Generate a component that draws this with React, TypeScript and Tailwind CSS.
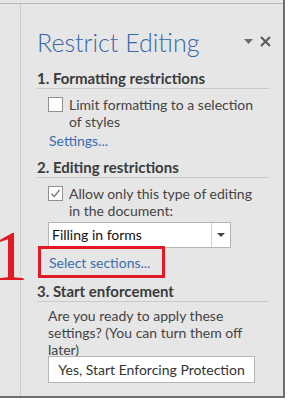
import React from "react";

const font = { fontFamily: 'Lato, "Noto Sans", sans-serif' };

function Check({ checked }: { checked?: boolean }) {
  return (
    <div className="w-[15px] h-[15px] shrink-0 border border-[#8f8f8f] bg-white flex items-center justify-center mt-[1px]">
      {checked && (
        <svg width="11" height="11" viewBox="0 0 11 11">
          <path d="M1.5 5.8 L4.2 8.6 L9.6 1.8" fill="none" stroke="#6a6a6a" strokeWidth="1.3" />
        </svg>
      )}
    </div>
  );
}

function Heading({ children, className = "" }: { children: React.ReactNode; className?: string }) {
  return (
    <div className={"border-b border-[#c9c9c9] text-[15px] font-bold text-[#3b3b3b] leading-[18px] pb-[1px] " + className}>
      {children}
    </div>
  );
}

export default function App() {
  return (
    <div className="w-[300px] h-[400px] bg-white relative overflow-hidden" style={font}>
      <div className="w-[285px] h-[398px] bg-[#e6e6e6] border-r-2 border-b-2 border-[#6e6e6e] flex flex-col">
        <div className="h-[4px] border-b border-[#b8b8b8] shrink-0" />
        <div className="flex flex-1">
          <div className="w-[21px] border-r border-[#cdcdcd] shrink-0" />
          <div className="flex-1 pl-[16px] pr-[14px] flex flex-col text-[14px] text-[#444]">
            <div className="flex items-center justify-between mt-[21px] h-[34px]">
              <div className="text-[25px] font-light text-[#3768ac] leading-[30px]">
                Restrict Editing
              </div>
              <div className="flex items-center gap-[7px] mr-[-2px] mt-[-2px]">
                <svg width="9" height="5" viewBox="0 0 9 5">
                  <path d="M0 0 H9 L4.5 5 Z" fill="#6b6b6b" />
                </svg>
                <svg width="11" height="11" viewBox="0 0 11 11">
                  <path d="M1 1 L10 10 M10 1 L1 10" stroke="#5c5c5c" strokeWidth="2.2" />
                </svg>
              </div>
            </div>
            <Heading className="mt-[10px]">1. Formatting restrictions</Heading>
            <div className="flex gap-[6px] pl-[11px] mt-[7px] leading-[17px]">
              <Check />
              <div>Limit formatting to a selection<br />of styles</div>
            </div>
            <div className="pl-[12px] mt-[2px] leading-[17px] text-[#3a6db0]">Settings...</div>
            <Heading className="mt-[9px]">2. Editing restrictions</Heading>
            <div className="flex gap-[6px] pl-[11px] mt-[7px] leading-[17px]">
              <Check checked />
              <div>Allow only this type of editing<br />in the document:</div>
            </div>
            <div className="ml-[11px] mt-[3px] w-[183px] h-[26px] bg-white border border-[#b5b5b5] flex">
              <div className="flex-1 pl-[3px] text-[14px] text-[#111] leading-[24px]">Filling in forms</div>
              <div className="w-[19px] border-l border-[#cfcfcf] flex items-center justify-center">
                <svg width="8" height="4" viewBox="0 0 8 4">
                  <path d="M0 0 H8 L4 4 Z" fill="#444" />
                </svg>
              </div>
            </div>
            <div className="pl-[12px] mt-[6px] leading-[17px] text-[#3a6db0]">Select sections...</div>
            <Heading className="mt-[11px]">3. Start enforcement</Heading>
            <div className="pl-[11px] mt-[5px] leading-[17px]">
              Are you ready to apply these<br />settings? (You can turn them off<br />later)
            </div>
            <div className="ml-[11px] mt-[-2px] w-[207px] h-[27px] bg-white border border-[#b5b5b5] flex items-center justify-center text-[14px] text-[#333]">
              Yes, Start Enforcing Protection
            </div>
          </div>
        </div>
      </div>
      <div className="absolute left-[38px] top-[246px] w-[127px] h-[32px] border-[3px] border-[#e01b24]" />
      <div
        className="absolute left-[-8px] top-[220px] text-[72px] leading-[72px] text-[#e01b24]"
        style={{ fontFamily: '"Liberation Serif", serif' }}
      >
        1
      </div>
    </div>
  );
}
